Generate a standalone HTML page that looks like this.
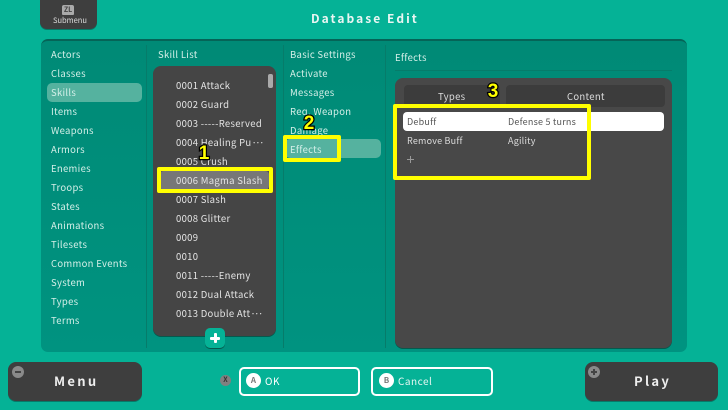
<!DOCTYPE html>
<html><head><meta charset="utf-8">
<style>
html,body{margin:0;padding:0}
body{width:728px;height:410px;overflow:hidden;background:#05b296;position:relative;font-family:"Noto Sans CJK JP","Liberation Sans",sans-serif;font-size:9.5px;color:#e4e4e4}
div{position:absolute;box-sizing:border-box}
.t{white-space:nowrap;line-height:14px;height:14px;letter-spacing:.3px}
.g{color:#d4efe8}
.e{letter-spacing:-1.5px}
.r{font-size:9px;letter-spacing:.22px}
.num{font-family:"Liberation Sans",sans-serif;font-weight:bold;font-size:19px;line-height:20px;color:#ffff00;-webkit-text-stroke:2.5px #000;paint-order:stroke fill;width:16px;text-align:center}
.y{border:4px solid #ffff00;border-radius:2px}
.btn{background:#3e3e3e;border-radius:8px;box-shadow:0 1px 0 #067a68}
.big{font-weight:bold;font-size:13px;letter-spacing:2.3px;color:#eee;line-height:20px;white-space:nowrap}
.circ{border-radius:50%;text-align:center}
.ok{border:2px solid #fff;border-radius:5px}
</style></head><body>

<div class="btn" style="left:40px;top:-8px;width:57px;height:37px;border-radius:7px"></div>
<div style="left:62px;top:5px;width:12px;height:10px;background:#aaa;border-radius:2px 2px 1px 1px;color:#444;font-size:7px;line-height:10px;text-align:center;font-weight:bold">ZL</div>
<div class="t" style="left:53px;top:14px;font-size:7.5px;color:#ddd;letter-spacing:0">Submenu</div>
<div class="t" style="left:311px;top:11px;font-size:12px;font-weight:bold;letter-spacing:2.05px;color:#eaf6f3;height:16px;line-height:16px">Database Edit</div>

<div style="left:41px;top:39px;width:646px;height:313px;background:linear-gradient(180deg,#008a76,#009380);border-radius:7px;border-top:2px solid #056457"></div>
<div style="left:146px;top:45px;width:1px;height:303px;background:#067c6a"></div>
<div style="left:283px;top:45px;width:1px;height:303px;background:#067c6a"></div>
<div style="left:385px;top:45px;width:1px;height:303px;background:#067c6a"></div>

<div style="left:47px;top:83px;width:95px;height:19px;background:#55b29f;border-radius:5px"></div>
<div class="t g" style="left:51px;top:47px">Actors</div>
<div class="t g" style="left:51px;top:66px">Classes</div>
<div class="t g" style="left:51px;top:85px">Skills</div>
<div class="t g" style="left:51px;top:104px">Items</div>
<div class="t g" style="left:51px;top:123px">Weapons</div>
<div class="t g" style="left:51px;top:142px">Armors</div>
<div class="t g" style="left:51px;top:161px">Enemies</div>
<div class="t g" style="left:51px;top:180px">Troops</div>
<div class="t g" style="left:51px;top:199px">States</div>
<div class="t g" style="left:51px;top:218px">Animations</div>
<div class="t g" style="left:51px;top:237px">Tilesets</div>
<div class="t g" style="left:51px;top:256px">Common Events</div>
<div class="t g" style="left:51px;top:275px">System</div>
<div class="t g" style="left:51px;top:294px">Types</div>
<div class="t g" style="left:51px;top:313px">Terms</div>

<div class="t g" style="left:158px;top:47px">Skill List</div>
<div style="left:153px;top:66px;width:123px;height:270px;background:#454545;border-radius:8px;box-shadow:0 1px 0 #05594d"></div>
<div style="left:268px;top:74px;width:5px;height:14px;background:#aaa;border-radius:2px"></div>
<div style="left:160px;top:170px;width:109px;height:20px;background:#777;border-radius:4px;box-shadow:inset 0 1px 0 #5a5a5a"></div>
<div class="t" style="left:176px;top:78px">0001 Attack</div>
<div class="t" style="left:176px;top:97px">0002 Guard</div>
<div class="t" style="left:176px;top:116px">0003 -----Reserved</div>
<div class="t" style="left:176px;top:135px">0004 Healing Pu<span class="e">···</span></div>
<div class="t" style="left:176px;top:154px">0005 Crush</div>
<div class="t" style="left:176px;top:173px">0006 Magma Slash</div>
<div class="t" style="left:176px;top:192px">0007 Slash</div>
<div class="t" style="left:176px;top:211px">0008 Glitter</div>
<div class="t" style="left:176px;top:230px">0009</div>
<div class="t" style="left:176px;top:249px">0010</div>
<div class="t" style="left:176px;top:268px">0011 -----Enemy</div>
<div class="t" style="left:176px;top:287px">0012 Dual Attack</div>
<div class="t" style="left:176px;top:306px">0013 Double Att<span class="e">···</span></div>
<div style="left:205px;top:328px;width:20px;height:20px;background:#05b296;border-radius:5px;box-shadow:0 1px 0 #05594d"></div>
<div style="left:210px;top:336.500px;width:10px;height:3px;background:#fff;border-radius:1px"></div>
<div style="left:213.500px;top:333px;width:3px;height:10px;background:#fff;border-radius:1px"></div>

<div style="left:285px;top:139px;width:96px;height:19px;background:#55b29f;border-radius:5px"></div>
<div class="t g" style="left:290px;top:47px">Basic Settings</div>
<div class="t g" style="left:290px;top:66px">Activate</div>
<div class="t g" style="left:290px;top:85px">Messages</div>
<div class="t g" style="left:290px;top:104px">Req. Weapon</div>
<div class="t g" style="left:290px;top:123px">Damage</div>
<div class="t g" style="left:290px;top:142px">Effects</div>

<div class="t g" style="left:395px;top:50px">Effects</div>
<div style="left:395px;top:70px;width:277px;height:1px;background:#067c6a"></div>
<div style="left:395px;top:78px;width:277px;height:270px;background:#484848;border-radius:8px;box-shadow:0 1px 0 #05594d"></div>
<div style="left:404px;top:85px;width:96px;height:22px;background:#3c3c3c;border-radius:4px"></div>
<div style="left:506px;top:85px;width:159px;height:22px;background:#3c3c3c;border-radius:4px"></div>
<div class="t" style="left:438px;top:89px;color:#ddd">Types</div>
<div class="t" style="left:567px;top:89px;color:#ddd">Content</div>
<div style="left:403px;top:112px;width:261px;height:19px;background:#fff;border-radius:4px"></div>
<div class="t r" style="left:407px;top:115px;color:#555">Debuff</div>
<div class="t r" style="left:508px;top:115px;color:#555">Defense 5 turns</div>
<div class="t r" style="left:407px;top:134px;color:#ddd">Remove Buff</div>
<div class="t r" style="left:508px;top:134px;color:#ddd">Agility</div>
<div style="left:407px;top:158.500px;width:7px;height:1px;background:#999"></div>
<div style="left:410px;top:155.500px;width:1px;height:7px;background:#999"></div>

<div class="y" style="left:157px;top:167px;width:116px;height:26px"></div>
<div class="y" style="left:283px;top:135px;width:58px;height:27px"></div>
<div class="y" style="left:393px;top:104px;width:198px;height:76px"></div>
<div class="num" style="left:196px;top:144px">1</div>
<div class="num" style="left:301px;top:114px">2</div>
<div class="num" style="left:485px;top:82px">3</div>

<div class="btn" style="left:8px;top:362px;width:134px;height:39px"></div>
<div class="circ" style="left:12px;top:366px;width:12px;height:12px;background:#8a8a8a"></div>
<div style="left:15px;top:371px;width:6px;height:2px;background:#444"></div>
<div class="big" style="left:54px;top:371px">Menu</div>

<div class="circ" style="left:220px;top:375px;width:11px;height:11px;background:#808080;color:#333;font-size:7px;line-height:11px;font-weight:bold">X</div>
<div class="ok" style="left:239px;top:367px;width:121px;height:29px"></div>
<div class="circ" style="left:246px;top:373px;width:15px;height:15px;background:#fff;color:#777;font-size:8px;line-height:15px;font-weight:bold">A</div>
<div class="t" style="left:265px;top:374px;color:#fff;font-size:10px;letter-spacing:.6px">OK</div>

<div class="ok" style="left:371px;top:367px;width:122px;height:29px"></div>
<div class="circ" style="left:379px;top:373px;width:15px;height:15px;background:#fff;color:#777;font-size:8px;line-height:15px;font-weight:bold">B</div>
<div class="t" style="left:398px;top:374px;color:#e6f6f2;font-size:10px;letter-spacing:.5px">Cancel</div>

<div class="btn" style="left:585px;top:362px;width:133px;height:39px"></div>
<div class="circ" style="left:588px;top:366px;width:12px;height:12px;background:#8a8a8a"></div>
<div style="left:591px;top:371px;width:6px;height:2px;background:#444"></div>
<div style="left:593px;top:369px;width:2px;height:6px;background:#444"></div>
<div class="big" style="left:634px;top:371px">Play</div>

</body></html>
